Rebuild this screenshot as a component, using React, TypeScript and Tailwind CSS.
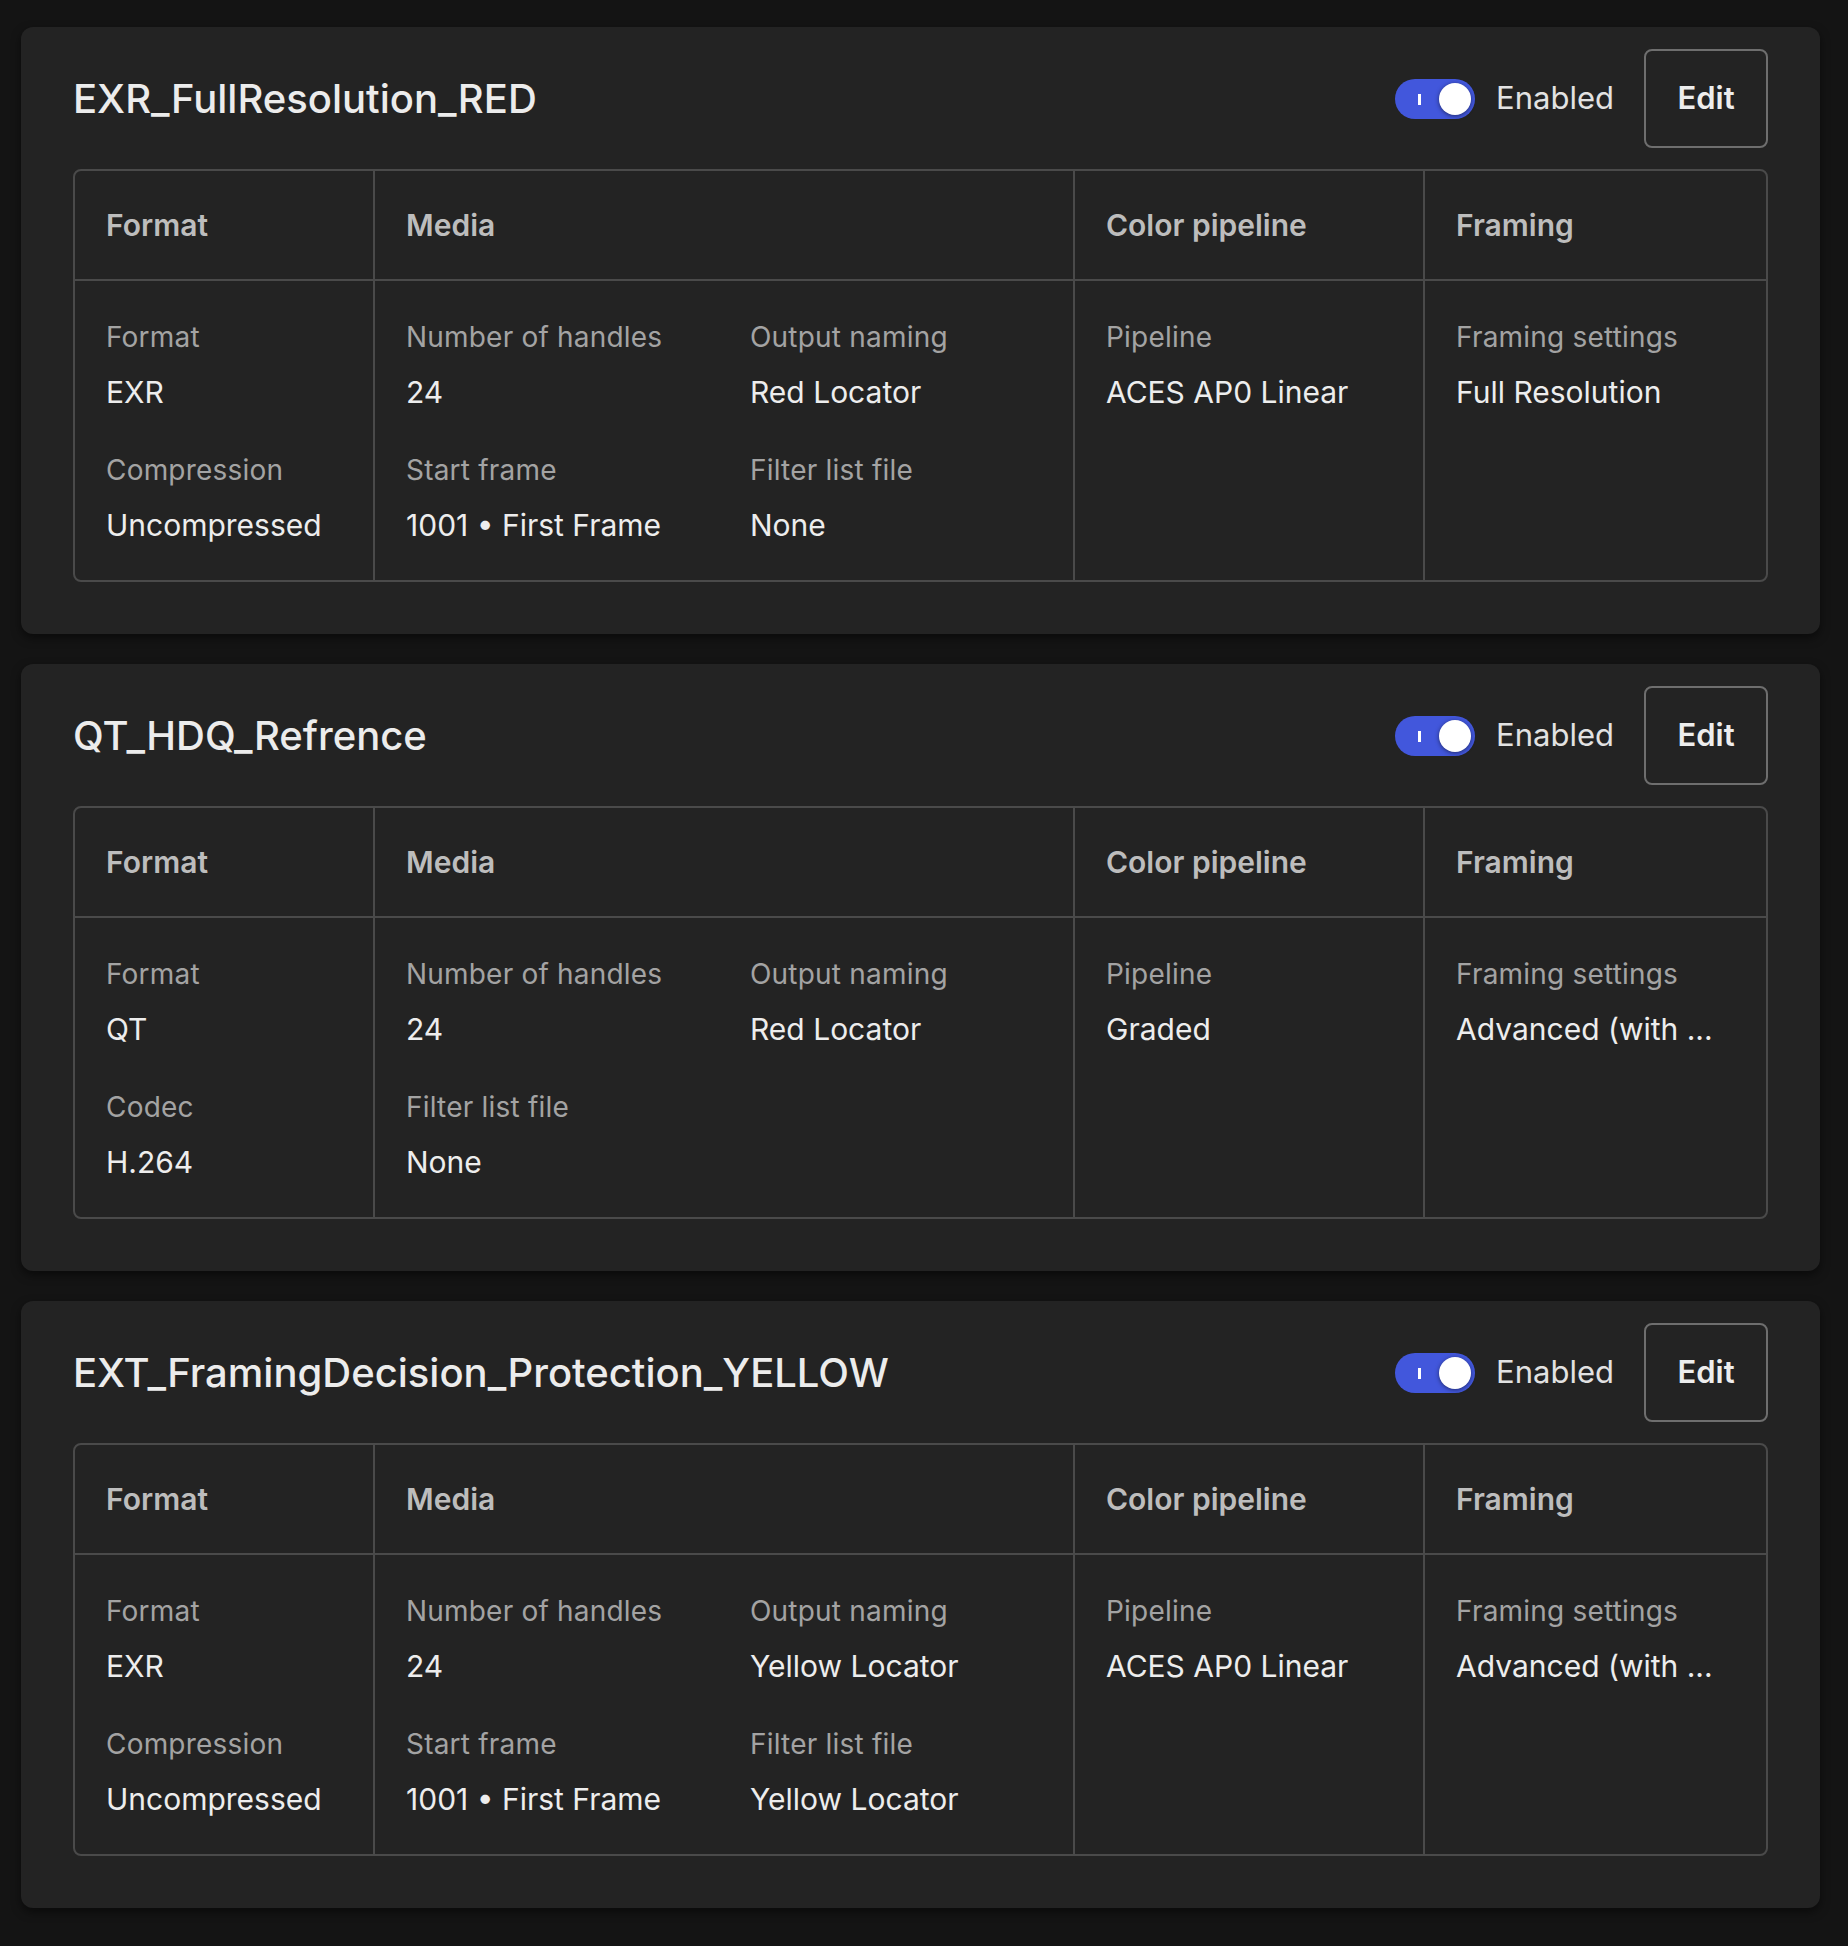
type Field = { label: string; value: string };

interface Preset {
  name: string;
  format: Field[];
  media: Field[];
  pipeline: string;
  framing: string;
}

const presets: Preset[] = [
  {
    name: "EXR_FullResolution_RED",
    format: [
      { label: "Format", value: "EXR" },
      { label: "Compression", value: "Uncompressed" },
    ],
    media: [
      { label: "Number of handles", value: "24" },
      { label: "Output naming", value: "Red Locator" },
      { label: "Start frame", value: "1001 • First Frame" },
      { label: "Filter list file", value: "None" },
    ],
    pipeline: "ACES AP0 Linear",
    framing: "Full Resolution",
  },
  {
    name: "QT_HDQ_Refrence",
    format: [
      { label: "Format", value: "QT" },
      { label: "Codec", value: "H.264" },
    ],
    media: [
      { label: "Number of handles", value: "24" },
      { label: "Output naming", value: "Red Locator" },
      { label: "Filter list file", value: "None" },
    ],
    pipeline: "Graded",
    framing: "Advanced (with ...",
  },
  {
    name: "EXT_FramingDecision_Protection_YELLOW",
    format: [
      { label: "Format", value: "EXR" },
      { label: "Compression", value: "Uncompressed" },
    ],
    media: [
      { label: "Number of handles", value: "24" },
      { label: "Output naming", value: "Yellow Locator" },
      { label: "Start frame", value: "1001 • First Frame" },
      { label: "Filter list file", value: "Yellow Locator" },
    ],
    pipeline: "ACES AP0 Linear",
    framing: "Advanced (with ...",
  },
];

function Item({ field }: { field: Field }) {
  return (
    <div className="flex flex-col gap-[15px]">
      <div className="text-[28px] leading-[40px] text-[#a3a3a3] tracking-[0.2px]">{field.label}</div>
      <div className="text-[30px] leading-[40px] text-[#ededed] whitespace-nowrap">{field.value}</div>
    </div>
  );
}

function Toggle() {
  return (
    <div className="relative w-[80px] h-[40px] rounded-full bg-[#4257dc] flex items-center">
      <span className="absolute left-[23px] top-[15px] w-[3px] h-[11px] bg-white" />
      <span className="absolute right-[4px] top-[4px] w-[32px] h-[32px] rounded-full bg-white shadow-[0_1px_4px_rgba(0,0,0,0.5)]" />
    </div>
  );
}

function PresetCard({ preset }: { preset: Preset }) {
  const head = "px-[31px] h-[110px] flex items-center text-[30px] font-semibold text-[#bdbdbd] border-b-2 border-[#4a4a4a]";
  const body = "px-[31px] pt-[36px] pb-[35px] flex flex-col gap-[38px]";
  return (
    <div className="bg-[#232323] rounded-[12px] shadow-[0_4px_10px_rgba(0,0,0,0.5)] px-[52px] pt-[22px] pb-[52px]">
      <div className="flex items-center justify-between">
        <h2 className="text-[40px] font-medium text-[#ececec]">{preset.name}</h2>
        <div className="flex items-center">
          <Toggle />
          <span className="ml-[21px] text-[31px] text-[#e2e2e2]">Enabled</span>
          <button className="ml-[30px] w-[124px] h-[99px] rounded-[8px] border-2 border-[#6e6e6e] text-[31px] font-semibold text-[#ededed]">
            Edit
          </button>
        </div>
      </div>
      <div className="mt-[21px] border-2 border-[#4a4a4a] rounded-[8px] grid grid-cols-[300px_700px_350px_1fr]">
        <div className="border-r-2 border-[#4a4a4a] flex flex-col">
          <div className={head}>Format</div>
          <div className={body}>
            {preset.format.map((f) => (
              <Item key={f.label} field={f} />
            ))}
          </div>
        </div>
        <div className="border-r-2 border-[#4a4a4a] flex flex-col">
          <div className={head}>Media</div>
          <div className="px-[31px] pt-[36px] pb-[35px] grid grid-cols-[344px_1fr] gap-y-[38px]">
            {preset.media.map((f) => (
              <Item key={f.label} field={f} />
            ))}
          </div>
        </div>
        <div className="border-r-2 border-[#4a4a4a] flex flex-col">
          <div className={head}>Color pipeline</div>
          <div className={body}>
            <Item field={{ label: "Pipeline", value: preset.pipeline }} />
          </div>
        </div>
        <div className="flex flex-col">
          <div className={head}>Framing</div>
          <div className={body}>
            <Item field={{ label: "Framing settings", value: preset.framing }} />
          </div>
        </div>
      </div>
    </div>
  );
}

export default function App() {
  return (
    <div
      className="min-h-[1946px] bg-[#141414] pl-[21px] pr-[28px] pt-[27px] flex flex-col gap-[30px]"
      style={{ fontFamily: "Inter, 'Noto Sans', sans-serif" }}
    >
      {presets.map((p) => (
        <PresetCard key={p.name} preset={p} />
      ))}
    </div>
  );
}
